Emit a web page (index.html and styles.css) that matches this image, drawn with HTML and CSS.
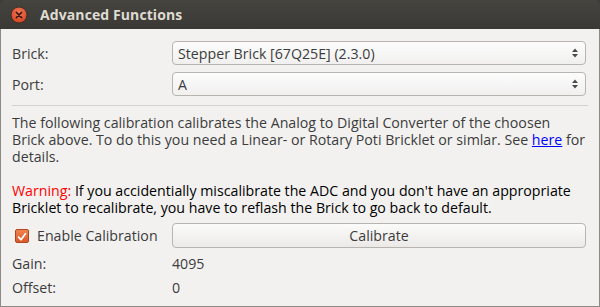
FILE: index.html
```html
<!DOCTYPE html>
<html>
<head>
<meta charset="utf-8">
<link rel="stylesheet" href="styles.css">
</head>
<body>
<div class="window">
  <div class="titlebar">
    <span class="close">
      <svg width="18" height="18" viewBox="0 0 18 18">
        <defs>
          <radialGradient id="cg" cx="50%" cy="35%" r="65%">
            <stop offset="0" stop-color="#f47a5c"/>
            <stop offset="1" stop-color="#d4421f"/>
          </radialGradient>
        </defs>
        <circle cx="9" cy="9" r="8" fill="url(#cg)" stroke="#2a2925" stroke-width="0.8"/>
        <path d="M6.4 6.4 L11.6 11.6 M11.6 6.4 L6.4 11.6" stroke="#3a1a10" stroke-width="1.6" stroke-linecap="round"/>
      </svg>
    </span>
    <span class="title">Advanced Functions</span>
  </div>
  <div class="content">
    <div class="form">
      <span class="label">Brick:</span>
      <div class="combo"><span>Stepper Brick [67Q25E] (2.3.0)</span><span class="arrows"><svg width="8" height="12" viewBox="0 0 8 12"><path d="M4 1.5 L7 5 L1 5 Z M1 7 L7 7 L4 10.5 Z" fill="#4a4a4a"/></svg></span></div>
      <span class="label">Port:</span>
      <div class="combo"><span>A</span><span class="arrows"><svg width="8" height="12" viewBox="0 0 8 12"><path d="M4 1.5 L7 5 L1 5 Z M1 7 L7 7 L4 10.5 Z" fill="#4a4a4a"/></svg></span></div>
    </div>
    <div class="sep"></div>
    <p class="info">The following calibration calibrates the Analog to Digital Converter of the choosen<br>Brick above. To do this you need a Linear- or Rotary Poti Bricklet or simlar. See <a href="#">here</a> for<br>details.</p>
    <p class="warning"><span class="red">Warning:</span> If you accidentially miscalibrate the ADC and you don't have an appropriate<br>Bricklet to recalibrate, you have to reflash the Brick to go back to default.</p>
    <div class="form actions">
      <label class="check"><span class="box"><svg width="14" height="14" viewBox="0 0 14 14"><path d="M3 7.2 L5.8 10.2 L11 3.2" fill="none" stroke="#fff" stroke-width="2" stroke-linecap="round" stroke-linejoin="round"/></svg></span>Enable Calibration</label>
      <button class="btn">Calibrate</button>
      <span class="label">Gain:</span>
      <span class="value">4095</span>
      <span class="label">Offset:</span>
      <span class="value">0</span>
    </div>
  </div>
</div>
</body>
</html>
```

FILE: styles.css
```css
html, body {
  margin: 0;
  padding: 0;
  background: #f2f1f0;
}
body {
  width: 600px;
  height: 307px;
  overflow: hidden;
  font-family: "Open Sans", "DejaVu Sans", sans-serif;
  font-size: 14.2px;
  color: #3c3c3c;
}
.window {
  width: 600px;
  height: 307px;
  box-sizing: border-box;
  display: flex;
  flex-direction: column;
  background: #3c3b37;
}
.titlebar {
  height: 29px;
  flex: none;
  display: flex;
  align-items: center;
  background: linear-gradient(#45443f, #3a3935);
  border-radius: 5px 5px 0 0;
  padding-left: 10px;
  box-sizing: border-box;
}
.close {
  display: flex;
  width: 18px;
  height: 18px;
}
.title {
  margin-left: 12px;
  font-weight: bold;
  font-size: 14px;
  color: #dfdbd2;
  letter-spacing: 0.1px;
}
.content {
  flex: 1;
  background: #f2f1f0;
  border-left: 1px solid #8c8a85;
  border-right: 1px solid #8c8a85;
  border-bottom: 1px solid #8c8a85;
  padding: 12px 13px 0 11px;
}
.form {
  display: grid;
  grid-template-columns: 160px 1fr;
  row-gap: 7px;
  align-items: center;
}
.label {
  line-height: 17px;
}
.combo {
  height: 24px;
  box-sizing: border-box;
  border: 1px solid #b8b5b0;
  border-radius: 4px;
  background: linear-gradient(#fcfcfc, #f1f0ef);
  display: flex;
  align-items: center;
  justify-content: space-between;
  padding: 0 6px 0 5px;
  color: #3c3c3c;
}
.arrows {
  display: flex;
}
.sep {
  height: 1px;
  background: #d5d2ce;
  margin: 9px -2px 8px 0;
}
p {
  margin: 0;
  line-height: 17px;
  white-space: nowrap;
}
.info {
  margin-bottom: 17px;
}
a {
  color: #0000ff;
}
.warning {
  color: #000;
}
.red {
  color: #ff0000;
}
.actions {
  margin-top: 7px;
  row-gap: 7px;
}
.check {
  display: flex;
  align-items: center;
  gap: 8px;
  padding-left: 3px;
}
.box {
  width: 14px;
  height: 14px;
  box-sizing: border-box;
  border: 1px solid #b0461c;
  border-radius: 2px;
  background: linear-gradient(#f0834f, #d9592a);
  display: flex;
}
.btn {
  height: 25px;
  border: 1px solid #b8b5b0;
  border-radius: 4px;
  background: linear-gradient(#fbfbfa, #eceae8);
  font-family: inherit;
  font-size: inherit;
  color: #3c3c3c;
  padding: 0;
}
.value {
  line-height: 17px;
}
```
